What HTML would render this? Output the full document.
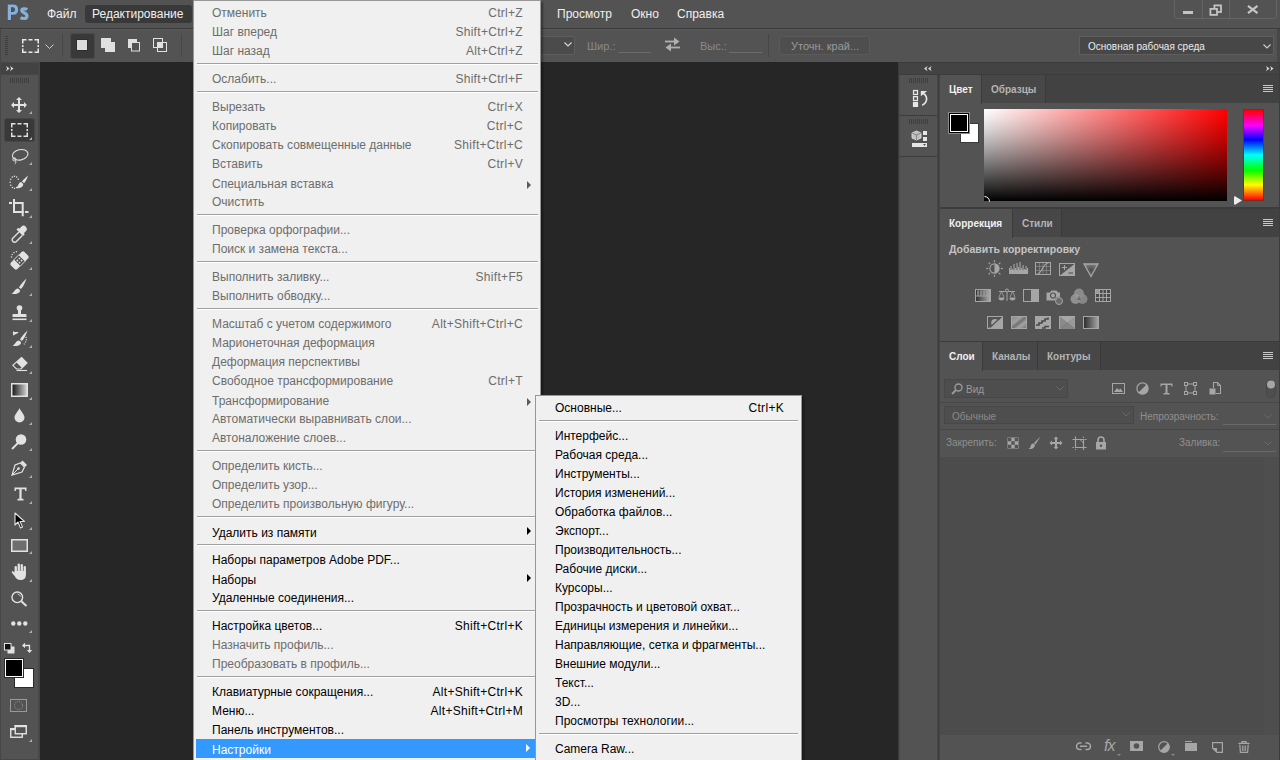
<!DOCTYPE html>
<html><head><meta charset="utf-8">
<style>
*{margin:0;padding:0;box-sizing:border-box}
html,body{width:1280px;height:760px;overflow:hidden;background:#535353;font-family:"Liberation Sans",sans-serif;position:relative}
.a{position:absolute}
svg{position:absolute;overflow:visible}
/* menubar */
#mbar{left:0;top:0;width:1280px;height:28px;background:#535353}
#mbar .m{position:absolute;top:6px;font-size:12px;color:#f0f0f0;line-height:16px}
#ps{left:7px;top:3px;font-size:20px;font-weight:bold;color:#6c9bd2;letter-spacing:-0.5px;line-height:20px}
#editbtn{left:85px;top:5px;width:107px;height:18px;background:#393939;border-radius:3px}
#mline{left:0;top:28px;width:1280px;height:1px;background:#3a3a3a}
#winctl{left:1174px;top:-3px;width:103px;height:22px;border:1px solid #646464;border-radius:0 0 3px 3px}
/* options */
#opts{left:0;top:29px;width:1280px;height:33px;background:#535353;border-top:1px solid #5a5a5a}
.vsep{position:absolute;width:1px;background:#474747}
.olbl{position:absolute;font-size:11px;color:#8f8f8f;line-height:14px}
/* canvas */
#canvas{left:40px;top:62px;width:858px;height:698px;background:#262626}
/* left tools */
#tools{left:0;top:62px;width:40px;height:698px;background:#474747}
#toolhdr{left:1px;top:63px;width:37px;height:11px;background:#434343}
#toolbody{left:1px;top:75px;width:37px;height:684px;background:#535353}
.tri{position:absolute;width:0;height:0;border-left:3px solid transparent;border-bottom:3px solid #c8c8c8}
/* right */
#rdock{left:898px;top:62px;width:42px;height:698px;background:#3c3c3c}
#rpanel{left:940px;top:62px;width:340px;height:698px;background:#3c3c3c}
.hdr{position:absolute;background:#434343}
.dockbtn{position:absolute;left:899px;width:38px;background:#535353}
.grip{position:absolute;height:5px;background:repeating-linear-gradient(90deg,#3e3e3e 0 1px,transparent 1px 2px)}
.panel{position:absolute;left:940px;width:339px;background:#535353}
.tabbar{position:absolute;left:0;top:0;right:0;height:28px;background:#424242}
.tab{position:absolute;top:0;height:28px;font-size:10px;font-weight:bold;line-height:30px;color:#b4b4b4;background:#474747;border-right:1px solid #3a3a3a;padding-left:9px}
.tab.act{background:#535353;color:#f0f0f0;height:29px}
.pmenu{position:absolute;right:6px;top:10px;width:10px;height:8px;background:repeating-linear-gradient(180deg,#c8c8c8 0 1px,transparent 1px 2px)}
.lbl{position:absolute;font-size:10px;color:#a8a8a8;line-height:14px}
.fld{position:absolute;background:#4e4e4e;border:1px solid #474747}
/* menus */
.menu{position:absolute;background:#f0f0f0;border:1px solid #979797}
.it{position:absolute;left:0;right:0;height:19px;font-size:12px;line-height:19px;color:#000}
.it .tx{position:absolute;left:18px;top:1px}
.it.sm .tx{top:2px}
.it .sc{position:absolute;right:17px;top:1px;letter-spacing:0.3px}
.it.dis{color:#6d6d6d}
.it.hi{background:#3399ff;color:#fff;left:2px;right:2px}
.it.hi .tx{left:16px}
.it .ar{position:absolute;right:9px;top:5px;width:0;height:0;border-left:4px solid #000;border-top:4px solid transparent;border-bottom:4px solid transparent}
.it.dis .ar{top:8px;border-left-color:#5a5a5a}
.it.hi .ar{border-left-color:#fff;right:8px}
.sep{position:absolute;left:3px;right:2px;background:#a0a0a0;border-bottom:1px solid #fff;height:2px}
#edit{left:193px;top:0px;width:348px;height:761px;box-shadow:2px 2px 2px rgba(0,0,0,0.35)}
#sub{left:535px;top:395px;width:267px;height:366px;box-shadow:2px 2px 2px rgba(0,0,0,0.35)}
#sub .sep{right:3px}
#sub .it .tx{left:19px}
</style></head><body>
<!-- MENUBAR -->
<div id="mbar" class="a">
  <svg style="left:0;top:0" width="32" height="24"><g stroke="#3a4656" stroke-width="1" fill="none" opacity="0.9"><path d="M7.7 4.4H13.5C16.5 4.4 18.2 6.2 18.2 9.5C18.2 12.8 16.3 14.8 13.3 14.8H11V20H7.7ZM11 7.2V12H13C14.3 12 15 11 15 9.6C15 8.2 14.3 7.2 13 7.2Z"/></g><path fill-rule="evenodd" fill="#88b0dd" d="M7.7 4.4H13.5C16.5 4.4 18.2 6.2 18.2 9.5C18.2 12.8 16.3 14.8 13.3 14.8H11V20H7.7ZM11 7.2V12H13C14.3 12 15 11 15 9.6C15 8.2 14.3 7.2 13 7.2Z"/><path d="M27.2 9.6C26.4 9 25.3 8.9 24.3 8.9C22.6 8.9 21.7 9.6 21.7 10.6C21.7 13 27 12.6 27 15.9C27 17.6 25.8 18.5 23.8 18.5C22.5 18.5 21.3 18.1 20.5 17.6" fill="none" stroke="#88b0dd" stroke-width="3.1"/></svg>
  <div class="m" style="left:47px">Файл</div>
  <div id="editbtn" class="a"></div>
  <div class="m" style="left:92px">Редактирование</div>
  <div class="m" style="left:557px">Просмотр</div>
  <div class="m" style="left:631px">Окно</div>
  <div class="m" style="left:677px">Справка</div>
  <div id="winctl" class="a"></div>
  <div class="a" style="left:1202px;top:0;width:1px;height:18px;background:#646464"></div>
  <div class="a" style="left:1229px;top:0;width:1px;height:18px;background:#646464"></div>
  <div class="a" style="left:1183px;top:11px;width:10px;height:3px;background:#c4c4c4"></div>
  <svg style="left:1209px;top:4px" width="14" height="12"><rect x="5.4" y="1.4" width="6.6" height="6.6" fill="none" stroke="#c4c4c4" stroke-width="1.8"/><rect x="1.4" y="4.9" width="6.6" height="6" fill="#535353" stroke="#c4c4c4" stroke-width="1.8"/></svg>
  <svg style="left:1247px;top:5px" width="12" height="9"><path d="M1 0.8L10.5 8.2M10.5 0.8L1 8.2" stroke="#c4c4c4" stroke-width="2.2"/></svg>
</div>
<div id="mline" class="a"></div>
<!-- OPTIONS -->
<div id="opts" class="a"></div>
<div class="a" style="left:0;top:29px;width:1px;height:33px;background:#474747"></div>
<div class="grip" style="left:5px;top:36px;width:3px;height:19px;background:repeating-linear-gradient(180deg,#3e3e3e 0 1px,transparent 1px 2px)"></div>
<svg style="left:22px;top:39px" width="17" height="14"><path d="M0.75 4.5V0.75H4.5M6.5 0.75H10.5M12.5 0.75H16.25V4.5M16.25 6V8M16.25 9.5V13.25H12.5M10.5 13.25H6.5M4.5 13.25H0.75V9.5M0.75 8V6" fill="none" stroke="#e8e8e8" stroke-width="1.5"/></svg>
<svg style="left:45px;top:44px" width="9" height="6"><path d="M0.5 0.5L4.5 4.5L8.5 0.5" fill="none" stroke="#d0d0d0" stroke-width="1"/></svg>
<div class="vsep" style="left:62px;top:34px;height:23px"></div>
<div class="a" style="left:70px;top:33px;width:25px;height:26px;background:#393939;border:1px solid #4a4a4a;border-radius:3px"></div>
<div class="a" style="left:76px;top:39px;width:12px;height:12px;background:#dcdcdc;border:1px solid #2e2e2e"></div>
<svg style="left:100px;top:37px" width="16" height="16"><rect x="1" y="1" width="10" height="10" fill="#e0e0e0"/><rect x="5" y="5" width="10" height="10" fill="#e0e0e0"/></svg>
<svg style="left:127px;top:38px" width="15" height="15"><rect x="1" y="1" width="9" height="9" fill="#e0e0e0"/><rect x="4.5" y="4.5" width="8" height="8.5" fill="#535353" stroke="#e0e0e0" stroke-width="1"/></svg>
<svg style="left:152px;top:37px" width="16" height="16"><rect x="1.5" y="1.5" width="9" height="9" fill="none" stroke="#e0e0e0" stroke-width="1"/><rect x="5.5" y="5.5" width="9" height="9" fill="none" stroke="#e0e0e0" stroke-width="1"/><rect x="5" y="5" width="6" height="6" fill="#e0e0e0"/></svg>
<div class="vsep" style="left:181px;top:34px;height:23px"></div>
<!-- right of menu -->
<div class="a" style="left:520px;top:36px;width:55px;height:19px;background:#4b4b4b;border:1px solid #5e5e5e;border-radius:2px"></div>
<svg style="left:564px;top:42px" width="8" height="5"><path d="M0.5 0.5L4 4L7.5 0.5" fill="none" stroke="#dadada" stroke-width="1.1"/></svg>
<div class="olbl" style="left:587px;top:39px;color:#8a8a8a;font-size:11px">Шир.:</div>
<div class="a" style="left:618px;top:52px;width:33px;height:1px;background:#6c6c6c"></div>
<svg style="left:664px;top:37px" width="17" height="15"><path d="M1 4.5H12" stroke="#b0b0b0" stroke-width="1.8"/><path d="M10 0.5L15.5 4.5L10 8.5Z" fill="#b0b0b0"/><path d="M5 10.5H16" stroke="#b0b0b0" stroke-width="1.8"/><path d="M7 6.5L1.5 10.5L7 14.5Z" fill="#b0b0b0"/></svg>
<div class="olbl" style="left:700px;top:39px;color:#8a8a8a;font-size:11px">Выс.:</div>
<div class="a" style="left:729px;top:52px;width:33px;height:1px;background:#6c6c6c"></div>
<div class="vsep" style="left:768px;top:34px;height:23px"></div>
<div class="a" style="left:779px;top:36px;width:91px;height:19px;background:#4e4e4e;border:1px solid #5a5a5a;border-radius:3px"></div>
<div class="olbl" style="left:791px;top:39px;color:#9a9a9a;font-size:11px">Уточн. край...</div>
<div class="a" style="left:1079px;top:36px;width:195px;height:19px;background:#474747;border:1px solid #5e5e5e"></div>
<div class="olbl" style="left:1088px;top:40px;color:#ececec;font-size:10px">Основная рабочая среда</div>
<svg style="left:1263px;top:44px" width="8" height="5"><path d="M0.5 0.5L4 4L7.5 0.5" fill="none" stroke="#cfcfcf" stroke-width="1.1"/></svg>
<div class="a" style="left:1277px;top:29px;width:3px;height:33px;background:#474747"></div>

<!-- TOOLS -->
<div id="tools" class="a"></div>
<div id="toolhdr" class="a"></div>
<div id="toolbody" class="a"></div>
<svg style="left:6px;top:66px" width="8" height="6"><path d="M0 0L3.6 2.6L0 5.2L1.1 2.6Z M4 0L7.6 2.6L4 5.2L5.1 2.6Z" fill="#d8d8d8"/></svg>
<div class="grip" style="left:10px;top:78px;width:20px"></div>
<svg style="left:11px;top:97px" width="16" height="16"><path d="M8 0L11 3H9V7H13V5L16 8L13 11V9H9V13H11L8 16L5 13H7V9H3V11L0 8L3 5V7H7V3H5Z" fill="#e2e2e2"/></svg>
<svg style="left:29px;top:111px" width="3" height="3"><path d="M3 0V3H0Z" fill="#b0b0b0"/></svg>
<div class="a" style="left:4px;top:118px;width:31px;height:24px;background:#393939;border:1px solid #464646;border-radius:3px"></div>
<svg style="left:11px;top:123px" width="17" height="14"><path d="M0.75 4.5V0.75H4.5M6.5 0.75H10.5M12.5 0.75H16.25V4.5M16.25 6V8M16.25 9.5V13.25H12.5M10.5 13.25H6.5M4.5 13.25H0.75V9.5M0.75 8V6" fill="none" stroke="#e2e2e2" stroke-width="1.5"/></svg>
<svg style="left:29px;top:137px" width="3" height="3"><path d="M3 0V3H0Z" fill="#b0b0b0"/></svg>
<svg style="left:11px;top:148px" width="18" height="17"><ellipse cx="9.2" cy="6.8" rx="7.9" ry="5.2" transform="rotate(-12 9.2 6.8)" fill="none" stroke="#e2e2e2" stroke-width="1.1"/><circle cx="3.4" cy="11.4" r="1.6" fill="none" stroke="#e2e2e2" stroke-width="1"/><path d="M4.5 12.5C5.2 14 4.8 15.5 3.8 16" fill="none" stroke="#e2e2e2" stroke-width="1"/></svg>
<svg style="left:29px;top:162px" width="3" height="3"><path d="M3 0V3H0Z" fill="#b0b0b0"/></svg>
<svg style="left:9px;top:175px" width="20" height="15"><circle cx="7.65" cy="12.50" r="0.75" fill="#e2e2e2"/><circle cx="5.50" cy="13.30" r="0.75" fill="#e2e2e2"/><circle cx="3.35" cy="12.50" r="0.75" fill="#e2e2e2"/><circle cx="1.78" cy="10.30" r="0.75" fill="#e2e2e2"/><circle cx="1.20" cy="7.30" r="0.75" fill="#e2e2e2"/><circle cx="1.78" cy="4.30" r="0.75" fill="#e2e2e2"/><circle cx="3.35" cy="2.10" r="0.75" fill="#e2e2e2"/><circle cx="5.50" cy="1.30" r="0.75" fill="#e2e2e2"/><circle cx="7.65" cy="2.10" r="0.75" fill="#e2e2e2"/><circle cx="9.22" cy="4.30" r="0.75" fill="#e2e2e2"/><path d="M19 0.5C17.5 1.8 14.5 4.5 13 6.3L15 8.3C16.6 6.6 18.3 3 19 0.5Z" fill="#e2e2e2"/><path d="M12.3 7C9.5 7.5 9.2 11 7.5 13.2C11 13.5 14.5 12 14.2 9Z" fill="#e2e2e2"/></svg>
<svg style="left:29px;top:188px" width="3" height="3"><path d="M3 0V3H0Z" fill="#b0b0b0"/></svg>
<svg style="left:9px;top:195px" width="21" height="22"><path d="M5 4V17H14.9M4 8H13.7V21.2M0 8H3M16 17H19.5" fill="none" stroke="#e2e2e2" stroke-width="2"/></svg>
<svg style="left:29px;top:215px" width="3" height="3"><path d="M3 0V3H0Z" fill="#b0b0b0"/></svg>
<svg style="left:11px;top:225px" width="17" height="18"><path d="M10.3 1.7A2.6 2.6 0 0 1 14.8 6.2L12.8 8.2L13.8 9.2L12 11L5.5 4.5L7.3 2.7L8.3 3.7Z" fill="#e2e2e2"/><path d="M8 7L2 13C0.9 14.1 0.9 15.6 1.9 16.5C2.9 17.5 4.4 17.4 5.4 16.4L11.3 10.5" fill="none" stroke="#e2e2e2" stroke-width="1.4"/></svg>
<svg style="left:29px;top:241px" width="3" height="3"><path d="M3 0V3H0Z" fill="#b0b0b0"/></svg>
<svg style="left:10px;top:250px" width="19" height="19"><path d="M1.5 7.5A6 6 0 0 1 7.5 1.5" fill="none" stroke="#e2e2e2" stroke-width="1.3" stroke-dasharray="1.1 1.4"/><g transform="rotate(-45 9.5 10.5)"><rect x="0" y="6" width="19" height="9" rx="2" fill="#e2e2e2"/><rect x="6" y="6" width="7" height="9" fill="#535353" stroke="#e2e2e2" stroke-width="0.8"/><circle cx="8" cy="9" r="0.9" fill="#e2e2e2"/><circle cx="11" cy="9" r="0.9" fill="#e2e2e2"/><circle cx="8" cy="12" r="0.9" fill="#e2e2e2"/><circle cx="11" cy="12" r="0.9" fill="#e2e2e2"/></g></svg>
<svg style="left:29px;top:267px" width="3" height="3"><path d="M3 0V3H0Z" fill="#b0b0b0"/></svg>
<svg style="left:11px;top:278px" width="16" height="17"><path d="M15.5 0.5C13 3 9 7 8 9.5L10 11C12 9 14.5 4 15.5 0.5Z" fill="#e2e2e2"/><path d="M7 10.5C4 10.5 3.5 14 0.5 16C4.5 16.5 9.5 15.5 9 12Z" fill="#e2e2e2"/></svg>
<svg style="left:29px;top:293px" width="3" height="3"><path d="M3 0V3H0Z" fill="#b0b0b0"/></svg>
<svg style="left:12px;top:305px" width="15" height="16"><circle cx="7.5" cy="3" r="2.8" fill="#e2e2e2"/><path d="M6 5H9V9H13.5C14.2 9 14.5 9.5 14.5 10V12H0.5V10C0.5 9.5 0.8 9 1.5 9H6Z" fill="#e2e2e2"/><rect x="0.5" y="13.5" width="14" height="1.6" fill="#e2e2e2"/></svg>
<svg style="left:29px;top:319px" width="3" height="3"><path d="M3 0V3H0Z" fill="#b0b0b0"/></svg>
<svg style="left:10px;top:330px" width="18" height="17"><path d="M9 2.5H5L3 1V5.5Z" fill="#e2e2e2"/><path d="M3.5 2.5H8" stroke="#e2e2e2" stroke-width="1"/><path d="M17.5 0.5C15 3 11 7 10 9.5L12 11C14 9 16.5 4 17.5 0.5Z" fill="#e2e2e2"/><path d="M9 10.5C6 10.5 5.5 14 2.5 16C6.5 16.5 11.5 15.5 11 12Z" fill="#e2e2e2"/><path d="M16 7C17 10 15.5 13 13.5 14.5" fill="none" stroke="#e2e2e2" stroke-width="1.2" stroke-dasharray="1 1.3"/></svg>
<svg style="left:29px;top:345px" width="3" height="3"><path d="M3 0V3H0Z" fill="#b0b0b0"/></svg>
<svg style="left:12px;top:357px" width="16" height="15"><path d="M9.5 0.5L15 6L9 12H4.5L0.8 8.3Z" fill="#535353" stroke="#e2e2e2" stroke-width="1.1"/><path d="M9.5 0.5L15 6L10 11L4.5 5.5Z" fill="#e2e2e2"/><path d="M4.5 13.5H15" stroke="#e2e2e2" stroke-width="1.1"/></svg>
<svg style="left:29px;top:371px" width="3" height="3"><path d="M3 0V3H0Z" fill="#b0b0b0"/></svg>
<svg style="left:11px;top:383px" width="17" height="14"><defs><linearGradient id="tg"><stop offset="0" stop-color="#111"/><stop offset="1" stop-color="#d8d8d8"/></linearGradient></defs><rect x="0.75" y="0.75" width="15.5" height="12.5" fill="url(#tg)" stroke="#e2e2e2" stroke-width="1.5"/></svg>
<svg style="left:29px;top:397px" width="3" height="3"><path d="M3 0V3H0Z" fill="#b0b0b0"/></svg>
<svg style="left:14px;top:408px" width="11" height="15"><path d="M5.5 0C6.5 3 10.5 6.5 10.5 9.5A5 5 0 0 1 0.5 9.5C0.5 6.5 4.5 3 5.5 0Z" fill="#e2e2e2"/></svg>
<svg style="left:29px;top:422px" width="3" height="3"><path d="M3 0V3H0Z" fill="#b0b0b0"/></svg>
<svg style="left:11px;top:434px" width="16" height="16"><circle cx="10" cy="5.5" r="5.3" fill="#e2e2e2"/><path d="M7 9L1 15" stroke="#e2e2e2" stroke-width="1.8"/></svg>
<svg style="left:29px;top:448px" width="3" height="3"><path d="M3 0V3H0Z" fill="#b0b0b0"/></svg>
<svg style="left:11px;top:460px" width="17" height="16"><path d="M11.5 0.5L16 5L14 7L9.5 2.5Z" fill="#e2e2e2"/><path d="M9.5 3L13.5 7L11 12L1 15L4 5Z" fill="none" stroke="#e2e2e2" stroke-width="1.2"/><path d="M1.5 14.5L7 9" stroke="#e2e2e2" stroke-width="1"/><circle cx="7.5" cy="8.5" r="1.3" fill="#e2e2e2"/></svg>
<svg style="left:29px;top:475px" width="3" height="3"><path d="M3 0V3H0Z" fill="#b0b0b0"/></svg>
<svg style="left:14px;top:487px" width="13" height="14"><path d="M0.5 0.5H12.5V4H11.3L10.8 2.3H7.6V11.7H9.5V13.5H3.5V11.7H5.4V2.3H2.2L1.7 4H0.5Z" fill="#e2e2e2"/></svg>
<svg style="left:29px;top:501px" width="3" height="3"><path d="M3 0V3H0Z" fill="#b0b0b0"/></svg>
<svg style="left:14px;top:512px" width="12" height="17"><path d="M1 1V13L4 10L6.5 16L8.5 15L6 9.5H10.5Z" fill="#000" stroke="#e2e2e2" stroke-width="1.1" stroke-linejoin="round"/></svg>
<svg style="left:29px;top:527px" width="3" height="3"><path d="M3 0V3H0Z" fill="#b0b0b0"/></svg>
<svg style="left:11px;top:539px" width="17" height="13"><rect x="0.75" y="0.75" width="15.5" height="11.5" fill="#6e6e6e" stroke="#e2e2e2" stroke-width="1.5"/></svg>
<svg style="left:29px;top:551px" width="3" height="3"><path d="M3 0V3H0Z" fill="#b0b0b0"/></svg>
<svg style="left:11px;top:563px" width="17" height="18"><rect x="3.6" y="3" width="2.3" height="8" rx="1.15" fill="#e2e2e2"/><rect x="6.6" y="0.5" width="2.3" height="10" rx="1.15" fill="#e2e2e2"/><rect x="9.6" y="1" width="2.3" height="10" rx="1.15" fill="#e2e2e2"/><rect x="12.6" y="3" width="2.3" height="9" rx="1.15" fill="#e2e2e2"/><path d="M3.6 8H14.9V12C14.9 15 13 17 9.5 17C6.5 17 5 15.5 4 13.5L0.8 9.5C0.3 8.7 1.3 7.8 2.2 8.4L3.6 9.8Z" fill="#e2e2e2"/></svg>
<svg style="left:29px;top:579px" width="3" height="3"><path d="M3 0V3H0Z" fill="#b0b0b0"/></svg>
<svg style="left:11px;top:591px" width="17" height="16"><circle cx="6.3" cy="6.3" r="5.3" fill="none" stroke="#e2e2e2" stroke-width="1.4"/><path d="M10.3 10.3L15.5 15" stroke="#e2e2e2" stroke-width="2"/><path d="M6.5 3A3.5 3.5 0 0 1 9.5 5.5" fill="none" stroke="#e2e2e2" stroke-width="0.8"/></svg>
<svg style="left:11px;top:621px" width="17" height="6"><circle cx="2.3" cy="2.5" r="2.2" fill="#e2e2e2"/><circle cx="8.3" cy="2.5" r="2.2" fill="#e2e2e2"/><circle cx="14.3" cy="2.5" r="2.2" fill="#e2e2e2"/></svg>
<svg style="left:29px;top:630px" width="3" height="3"><path d="M3 0V3H0Z" fill="#b0b0b0"/></svg>
<svg style="left:4px;top:643px" width="11" height="11"><rect x="3.5" y="3.5" width="7" height="7" fill="#e2e2e2"/><rect x="0.5" y="0.5" width="6.5" height="6.5" fill="#111" stroke="#e2e2e2" stroke-width="1"/></svg>
<svg style="left:22px;top:642px" width="11" height="11"><path d="M2 3.5H7.5V10" fill="none" stroke="#e2e2e2" stroke-width="1.3"/><path d="M0 3.5L3 0.8V6.2Z" fill="#e2e2e2"/><path d="M4.8 8L7.5 11L10.2 8Z" fill="#e2e2e2"/></svg>
<div class="a" style="left:14px;top:668px;width:20px;height:20px;background:#fff;border:1px solid #2a2a2a"></div>
<div class="a" style="left:4px;top:658px;width:20px;height:20px;background:#000;border:1px solid #2a2a2a;box-shadow:inset 0 0 0 1px #fff"></div>
<svg style="left:10px;top:699px" width="17" height="13"><rect x="0.5" y="0.5" width="16" height="12" fill="none" stroke="#9a9a9a" stroke-width="1"/><circle cx="8.5" cy="6.5" r="4" fill="none" stroke="#9a9a9a" stroke-width="1" stroke-dasharray="1 1.1"/></svg>
<svg style="left:10px;top:725px" width="17" height="13"><rect x="0.75" y="3.75" width="11.5" height="8.5" fill="none" stroke="#e2e2e2" stroke-width="1.4"/><rect x="0" y="3" width="6" height="2.2" fill="#e2e2e2"/><rect x="5.25" y="0.75" width="11" height="8" fill="#535353" stroke="#e2e2e2" stroke-width="1.4"/><rect x="4.5" y="0" width="12.5" height="2.2" fill="#e2e2e2"/></svg>
<svg style="left:29px;top:739px" width="3" height="3"><path d="M3 0V3H0Z" fill="#b0b0b0"/></svg>
<div id="canvas" class="a"></div>
<!-- RIGHT -->
<div id="rdock" class="a"></div>
<div id="rpanel" class="a"></div>
<!-- header strip -->
<div class="hdr" style="left:899px;top:63px;width:380px;height:11px"></div>
<svg style="left:924px;top:66px" width="8" height="6"><path d="M3.6 0L0 2.6L3.6 5.2L2.5 2.6Z M7.6 0L4 2.6L7.6 5.2L6.5 2.6Z" fill="#d8d8d8"/></svg>
<svg style="left:1266px;top:66px" width="8" height="6"><path d="M0 0L3.6 2.6L0 5.2L1.1 2.6Z M4 0L7.6 2.6L4 5.2L5.1 2.6Z" fill="#d8d8d8"/></svg>
<!-- dock buttons -->
<div class="dockbtn" style="top:75px;height:40px"></div>
<div class="grip" style="left:909px;top:78px;width:20px"></div>
<svg style="left:912px;top:89px" width="18" height="19">
  <rect x="1.55" y="1.55" width="3.9" height="3.9" fill="none" stroke="#e6e6e6" stroke-width="1.3"/>
  <rect x="1.55" y="7.65" width="3.9" height="3.9" fill="none" stroke="#e6e6e6" stroke-width="1.3"/>
  <rect x="0.9" y="13" width="5.2" height="5" fill="#e6e6e6"/>
  <path d="M8.8 2L15.1 2L8.8 7.2Z" fill="#e6e6e6"/>
  <path d="M11 4.2C14.3 5.5 15.3 9.5 14.2 12.3C13.4 14.3 12 15.5 10.2 16.3" fill="none" stroke="#e6e6e6" stroke-width="1.7"/>
</svg>
<div class="dockbtn" style="top:116px;height:40px"></div>
<div class="grip" style="left:909px;top:119px;width:20px"></div>
<svg style="left:911px;top:130px" width="18" height="18">
  <path d="M1 3L5.5 1L10 3V8L5.5 10L1 8Z" fill="#bdbdbd" stroke="#e6e6e6" stroke-width="0.8"/>
  <path d="M1 3L5.5 5L10 3M5.5 5V10" fill="none" stroke="#777" stroke-width="0.8"/>
  <rect x="12" y="1" width="4" height="4" fill="#e6e6e6"/>
  <rect x="12" y="7" width="4" height="4" fill="#e6e6e6"/>
  <rect x="1" y="13" width="15" height="4" fill="#e6e6e6"/>
  <path d="M12 14H15L13.5 16Z" fill="#555"/>
</svg>
<div class="dockbtn" style="top:157px;height:603px"></div>
<div class="a" style="left:937px;top:75px;width:1px;height:685px;background:#464646"></div>
<div class="a" style="left:939px;top:75px;width:1px;height:685px;background:#464646"></div>
<div class="a" style="left:899px;top:75px;width:1px;height:685px;background:#4a4a4a"></div>

<!-- COLOR PANEL -->
<div class="panel" style="top:75px;height:133px">
  <div class="tabbar"></div>
  <div class="tab act" style="left:0;width:42px">Цвет</div>
  <div class="tab" style="left:42px;width:64px;top:0">Образцы</div>
  <div class="pmenu"></div>
</div>
<!-- swatches -->
<div class="a" style="left:960px;top:123px;width:19px;height:20px;background:#fff;border:1px solid #3a3a3a"></div>
<div class="a" style="left:948px;top:112px;width:22px;height:22px;border:1px solid #8a8a8a;background:#000;box-shadow:inset 0 0 0 1px #000, inset 0 0 0 2px #fff"></div>
<!-- color field -->
<div class="a" style="left:984px;top:109px;width:243px;height:92px;background:linear-gradient(to bottom,rgba(0,0,0,0.000) 0.0%,rgba(0,0,0,0.074) 12.5%,rgba(0,0,0,0.177) 25.0%,rgba(0,0,0,0.293) 37.5%,rgba(0,0,0,0.420) 50.0%,rgba(0,0,0,0.556) 62.5%,rgba(0,0,0,0.698) 75.0%,rgba(0,0,0,0.846) 87.5%,rgba(0,0,0,1.000) 100.0%),linear-gradient(to right,#fff,#f00)"></div>
<svg style="left:984px;top:196px" width="7" height="6"><path d="M0.5 0.5 A5 5 0 0 1 5.5 5.5" fill="none" stroke="#fff" stroke-width="1"/></svg>
<div class="a" style="left:1243px;top:109px;width:21px;height:92px;border:1px solid #7a2b2b;background:linear-gradient(to bottom,#f00 0%,#f0f 17%,#00f 33%,#0ff 50%,#0f0 67%,#ff0 83%,#f00 100%)"></div>
<svg style="left:1233px;top:196px" width="10" height="10"><path d="M1 1.5C1 0.5 1.5 0 2.5 0.5L9 4.5L2.5 8.5C1.5 9 1 8.5 1 7.5Z" fill="#ececec"/></svg>
<div class="a" style="left:940px;top:207px;width:339px;height:2px;background:#3c3c3c"></div>

<!-- CORRECTION PANEL -->
<div class="panel" style="top:209px;height:132px">
  <div class="tabbar"></div>
  <div class="tab act" style="left:0;width:73px">Коррекция</div>
  <div class="tab" style="left:73px;width:49px">Стили</div>
  <div class="pmenu"></div>
  <div class="a" style="left:9px;top:33px;font-size:10.5px;font-weight:bold;color:#c4c4c4;line-height:14px">Добавить корректировку</div>
</div>
<svg style="left:986px;top:260px" width="17" height="17"><circle cx="8.5" cy="8.5" r="4.6" fill="none" stroke="#a6a6a6" stroke-width="1.1"/><path d="M8.5 3.9A4.6 4.6 0 0 1 8.5 13.1Z" fill="#a6a6a6"/><line x1="14.80" y1="8.50" x2="16.80" y2="8.50" stroke="#a6a6a6" stroke-width="1.2"/><line x1="12.95" y1="12.95" x2="14.37" y2="14.37" stroke="#a6a6a6" stroke-width="1.2"/><line x1="8.50" y1="14.80" x2="8.50" y2="16.80" stroke="#a6a6a6" stroke-width="1.2"/><line x1="4.05" y1="12.95" x2="2.63" y2="14.37" stroke="#a6a6a6" stroke-width="1.2"/><line x1="2.20" y1="8.50" x2="0.20" y2="8.50" stroke="#a6a6a6" stroke-width="1.2"/><line x1="4.05" y1="4.05" x2="2.63" y2="2.63" stroke="#a6a6a6" stroke-width="1.2"/><line x1="8.50" y1="2.20" x2="8.50" y2="0.20" stroke="#a6a6a6" stroke-width="1.2"/><line x1="12.95" y1="4.05" x2="14.37" y2="2.63" stroke="#a6a6a6" stroke-width="1.2"/></svg>
<svg style="left:1009px;top:262px" width="20" height="13"><rect x="0" y="8" width="19" height="4" fill="#a6a6a6"/><rect x="0.0" y="6" width="1.1" height="5" fill="#a6a6a6"/><rect x="1.5" y="4" width="1.1" height="7" fill="#a6a6a6"/><rect x="3.0" y="7" width="1.1" height="4" fill="#a6a6a6"/><rect x="4.5" y="2" width="1.1" height="9" fill="#a6a6a6"/><rect x="6.0" y="6" width="1.1" height="5" fill="#a6a6a6"/><rect x="7.5" y="1" width="1.1" height="10" fill="#a6a6a6"/><rect x="9.0" y="5" width="1.1" height="6" fill="#a6a6a6"/><rect x="10.5" y="0" width="1.1" height="11" fill="#a6a6a6"/><rect x="12.0" y="6" width="1.1" height="5" fill="#a6a6a6"/><rect x="13.5" y="3" width="1.1" height="8" fill="#a6a6a6"/><rect x="15.0" y="7" width="1.1" height="4" fill="#a6a6a6"/><rect x="16.5" y="4" width="1.1" height="7" fill="#a6a6a6"/><rect x="18.0" y="6" width="1.1" height="5" fill="#a6a6a6"/></svg>
<svg style="left:1035px;top:262px" width="17" height="14"><rect x="0.5" y="0.5" width="15" height="12" fill="none" stroke="#a6a6a6"/><path d="M4.5 0.5V12.5M8 0.5V12.5M11.5 0.5V12.5M0.5 4.5H15.5M0.5 8.5H15.5" stroke="#a6a6a6" stroke-width="0.7" opacity="0.7"/><path d="M0.5 12.5C5 12.5 6 9 7.5 6.5C9 4 10 0.5 15.5 0.5" fill="none" stroke="#a6a6a6" stroke-width="1.1"/></svg>
<svg style="left:1059px;top:263px" width="17" height="14"><rect x="0.5" y="0.5" width="15" height="12" fill="none" stroke="#a6a6a6"/><path d="M1 12.5L15.5 1V12.5Z" fill="#a6a6a6"/><path d="M3 4.5H8M5.5 2V7" stroke="#a6a6a6" stroke-width="1.1"/><path d="M9.5 10H14" stroke="#535353" stroke-width="1.1"/></svg>
<svg style="left:1083px;top:263px" width="16" height="14"><defs><radialGradient id="vg"><stop offset="0" stop-color="#4a4a4a"/><stop offset="1" stop-color="#7a7a7a"/></radialGradient></defs><path d="M1 1H15L8 13.5Z" fill="url(#vg)" stroke="#a6a6a6" stroke-width="1.3"/></svg>
<svg style="left:975px;top:289px" width="17" height="14"><defs><linearGradient id="hg"><stop offset="0" stop-color="#2e2e2e"/><stop offset="1" stop-color="#b0b0b0"/></linearGradient></defs><rect x="0.5" y="0.5" width="15" height="12" fill="url(#hg)" stroke="#a6a6a6"/><path d="M3 1.5V6.5M6 1.5V6.5M9 1.5V6.5M12 1.5V6.5" stroke="#9a9a9a" stroke-width="1.4"/><rect x="1" y="6.5" width="15" height="1" fill="#a6a6a6"/></svg>
<svg style="left:998px;top:288px" width="19" height="15"><path d="M1 3.5H17M9 1.5V13" stroke="#a6a6a6" stroke-width="1"/><circle cx="9" cy="2.5" r="1.5" fill="#535353" stroke="#a6a6a6"/><path d="M3.5 3.5L1 9M3.5 3.5L6 9M14.5 3.5L12 9M14.5 3.5L17 9" stroke="#a6a6a6" stroke-width="0.8"/><path d="M0.5 9.5H6.5A3 3 0 0 1 0.5 9.5Z" fill="#a6a6a6"/><path d="M11.5 9.5H17.5A3 3 0 0 1 11.5 9.5Z" fill="#a6a6a6"/></svg>
<svg style="left:1023px;top:289px" width="17" height="14"><rect x="0.5" y="0.5" width="15" height="12" fill="none" stroke="#a6a6a6"/><rect x="8" y="0.5" width="8" height="12.5" fill="#a6a6a6"/></svg>
<svg style="left:1046px;top:289px" width="18" height="17"><path d="M0.5 3.5H4L5.5 1.5H10.5L12 3.5H14V8A4 4 0 0 0 9 11.5H0.5Z" fill="#a6a6a6"/><circle cx="7" cy="6.5" r="2.5" fill="none" stroke="#535353" stroke-width="1.2"/><circle cx="13" cy="12" r="3.5" fill="#6a6a6a" stroke="#a6a6a6" stroke-width="1"/></svg>
<svg style="left:1070px;top:288px" width="18" height="17"><circle cx="9" cy="5.5" r="5" fill="#8a8a8a"/><circle cx="5.5" cy="11" r="5" fill="#9a9a9a" opacity="0.85"/><circle cx="12.5" cy="11" r="5" fill="#8f8f8f" opacity="0.85"/><path d="M9 8L7 12H11Z" fill="#6a6a6a"/></svg>
<svg style="left:1095px;top:289px" width="17" height="14"><rect x="0.5" y="0.5" width="15" height="12" fill="#4a4a4a" stroke="#a6a6a6"/><path d="M4.5 0.5V12.5M8 0.5V12.5M11.5 0.5V12.5M0.5 4.5H15.5M0.5 8.5H15.5" stroke="#a6a6a6" stroke-width="1"/><rect x="1" y="1" width="3" height="3" fill="#9a9a9a"/></svg>
<svg style="left:987px;top:316px" width="17" height="14"><rect x="0.5" y="0.5" width="15" height="12" fill="none" stroke="#a6a6a6"/><path d="M1 12.5L15.5 1V12.5Z" fill="#a6a6a6"/><circle cx="8" cy="6.8" r="3.8" fill="#a6a6a6"/><path d="M3 11.5L13 2" stroke="#535353" stroke-width="1.1"/></svg>
<svg style="left:1011px;top:316px" width="17" height="14"><defs><linearGradient id="pg" x1="0" y1="0" x2="1" y2="1"><stop offset="0" stop-color="#8a8a8a"/><stop offset="0.35" stop-color="#a0a0a0"/><stop offset="0.5" stop-color="#707070"/><stop offset="0.7" stop-color="#a5a5a5"/><stop offset="1" stop-color="#6a6a6a"/></linearGradient></defs><rect x="0.5" y="0.5" width="15" height="12" fill="url(#pg)" stroke="#a6a6a6"/></svg>
<svg style="left:1035px;top:316px" width="17" height="14"><rect x="0.5" y="0.5" width="15" height="12" fill="#a6a6a6" stroke="#a6a6a6"/><path d="M1 9L4 9L4 7L7 7L7 5L10 5L10 3L13 3L13 1.5" fill="none" stroke="#4a4a4a" stroke-width="1.6"/><path d="M7 12L10 12L10 10.5L14 10.5" fill="none" stroke="#4a4a4a" stroke-width="1.4"/></svg>
<svg style="left:1059px;top:316px" width="17" height="14"><rect x="0.5" y="0.5" width="15" height="12" fill="none" stroke="#a6a6a6"/><path d="M1 1L8.5 7L1 13Z" fill="#8a8a8a"/><path d="M16 1L8.5 7L16 13Z" fill="#9a9a9a"/><path d="M1 1L8.5 7L16 1Z" fill="#a6a6a6"/><path d="M1 13L8.5 7L16 13Z" fill="#858585"/></svg>
<svg style="left:1083px;top:316px" width="17" height="14"><defs><linearGradient id="gm"><stop offset="0" stop-color="#2a2a2a"/><stop offset="1" stop-color="#a8a8a8"/></linearGradient></defs><rect x="0.5" y="0.5" width="15" height="12" fill="url(#gm)" stroke="#a6a6a6"/></svg>

<!-- LAYERS PANEL -->
<div class="panel" style="top:342px;height:418px">
  <div class="tabbar"></div>
  <div class="tab act" style="left:0;width:43px">Слои</div>
  <div class="tab" style="left:43px;width:55px">Каналы</div>
  <div class="tab" style="left:98px;width:63px">Контуры</div>
  <div class="pmenu"></div>
</div>
<!-- filter row -->
<div class="fld" style="left:944px;top:379px;width:124px;height:19px"></div>
<svg style="left:951px;top:383px" width="12" height="12"><circle cx="7.5" cy="4.5" r="3.5" fill="none" stroke="#999" stroke-width="1.4"/><path d="M5 7L1 11" stroke="#999" stroke-width="2"/></svg>
<div class="lbl" style="left:966px;top:383px;color:#9a9a9a">Вид</div>
<svg style="left:1056px;top:386px" width="8" height="5"><path d="M0.5 0.5L4 4L7.5 0.5" fill="none" stroke="#6a6a6a"/></svg>
<svg style="left:1112px;top:383px" width="13" height="12"><rect x="0.5" y="0.5" width="12" height="10" fill="none" stroke="#a6a6a6"/><path d="M2 9L5 5L7 7L8.5 5.5L11 9Z" fill="#a6a6a6"/></svg>
<svg style="left:1136px;top:382px" width="13" height="13"><circle cx="6.5" cy="6.5" r="5.6" fill="none" stroke="#a6a6a6" stroke-width="1.2"/><path d="M10.5 2.5A5.6 5.6 0 0 1 2.5 10.5Z" fill="#a6a6a6"/></svg>
<svg style="left:1160px;top:383px" width="13" height="12"><path d="M0.5 0.5H12.5V3.5H11.5L11 2H7.5V10H9.5V11.5H3.5V10H5.5V2H2L1.5 3.5H0.5Z" fill="#a6a6a6"/></svg>
<svg style="left:1184px;top:382px" width="13" height="13"><rect x="2" y="2" width="9" height="9" fill="none" stroke="#a6a6a6"/><rect x="0.5" y="0.5" width="3" height="3" fill="#535353" stroke="#a6a6a6"/><rect x="9.5" y="0.5" width="3" height="3" fill="#535353" stroke="#a6a6a6"/><rect x="0.5" y="9.5" width="3" height="3" fill="#535353" stroke="#a6a6a6"/><rect x="9.5" y="9.5" width="3" height="3" fill="#535353" stroke="#a6a6a6"/></svg>
<svg style="left:1209px;top:382px" width="12" height="14"><path d="M4.5 6V0.5H8.5L11.5 3.5V11.5H7" fill="none" stroke="#a6a6a6" stroke-width="1.1"/><path d="M8.5 0.5V3.5H11.5" fill="none" stroke="#a6a6a6" stroke-width="0.9"/><rect x="0.5" y="6.5" width="6" height="6" fill="#a6a6a6"/></svg>
<svg style="left:1266px;top:380px" width="10" height="18"><rect x="0.5" y="0.5" width="9" height="17" rx="4.5" fill="#4e4e4e" stroke="#474747"/><circle cx="5" cy="4.5" r="4" fill="#a6a6a6"/></svg>

<div class="a" style="left:940px;top:402px;width:339px;height:1px;background:#474747"></div>
<!-- blend row -->
<div class="fld" style="left:944px;top:406px;width:190px;height:18px"></div>
<div class="lbl" style="left:952px;top:410px;color:#8a8a8a">Обычные</div>
<svg style="left:1122px;top:412px" width="8" height="5"><path d="M0.5 0.5L4 4L7.5 0.5" fill="none" stroke="#6a6a6a"/></svg>
<div class="lbl" style="left:1140px;top:410px;color:#8f8f8f">Непрозрачность:</div>
<div class="a" style="left:1223px;top:424px;width:53px;height:1px;background:#6a6a6a"></div>
<svg style="left:1264px;top:414px" width="8" height="5"><path d="M0.5 0.5L4 4L7.5 0.5" fill="none" stroke="#6a6a6a"/></svg>
<div class="a" style="left:940px;top:429px;width:339px;height:1px;background:#474747"></div>
<!-- lock row -->
<div class="lbl" style="left:946px;top:436px;color:#8f8f8f">Закрепить:</div>
<svg style="left:1007px;top:437px" width="12" height="12"><rect x="0.5" y="0.5" width="11" height="11" fill="#a6a6a6"/><path d="M1 1h3.3v3.3H1zM7.7 1H11v3.3H7.7zM4.3 4.3h3.4v3.4H4.3zM1 7.7h3.3V11H1zM7.7 7.7H11V11H7.7z" fill="#535353"/></svg>
<svg style="left:1028px;top:436px" width="13" height="14"><path d="M12.5 0.5L6 7L7.5 8.5Z" fill="#a6a6a6"/><path d="M5.5 7.5C3 7.5 2.5 10 2.5 11C2 12 1 12.5 0.5 13C3 13.5 6.5 12.5 7 9Z" fill="#a6a6a6"/></svg>
<svg style="left:1049px;top:436px" width="14" height="14"><path d="M7 0.5L9.5 3H8V6H11V4.5L13.5 7L11 9.5V8H8V11H9.5L7 13.5L4.5 11H6V8H3V9.5L0.5 7L3 4.5V6H6V3H4.5Z" fill="#a6a6a6"/></svg>
<svg style="left:1072px;top:436px" width="15" height="14"><path d="M3.5 0.5V11.5H14.5M0.5 3.5H11.5V14" fill="none" stroke="#a6a6a6" stroke-width="1.1"/><path d="M0.5 11.5H2M12.5 3.5H14.5M3.5 13V14M11.5 0.5V2" stroke="#a6a6a6"/><path d="M8 3.5L11.5 7" stroke="#a6a6a6"/></svg>
<svg style="left:1095px;top:436px" width="12" height="14"><path d="M3 6V4A3 3 0 0 1 9 4V6" fill="none" stroke="#a6a6a6" stroke-width="1.6"/><rect x="1" y="6" width="10" height="7.5" fill="#a6a6a6"/><circle cx="6" cy="9.7" r="1.2" fill="#535353"/></svg>

<div class="lbl" style="left:1179px;top:436px;color:#8f8f8f">Заливка:</div>
<div class="a" style="left:1223px;top:451px;width:53px;height:1px;background:#6a6a6a"></div>
<svg style="left:1264px;top:441px" width="8" height="5"><path d="M0.5 0.5L4 4L7.5 0.5" fill="none" stroke="#6a6a6a"/></svg>
<!-- layers body -->
<div class="a" style="left:940px;top:457px;width:339px;height:278px;background:#4c4c4c"></div>
<div class="a" style="left:1264px;top:457px;width:15px;height:278px;background:#4e4e4e"></div>
<div class="a" style="left:940px;top:735px;width:339px;height:25px;background:#535353"></div>
<svg style="left:1076px;top:742px" width="15" height="9"><path d="M5.5 1H3.8A3 3 0 0 0 3.8 7.5H5.5M9.5 1H11.2A3 3 0 0 1 11.2 7.5H9.5" fill="none" stroke="#a6a6a6" stroke-width="1.5"/><path d="M4 4.25H11" stroke="#a6a6a6" stroke-width="1.5"/></svg>
<div class="a" style="left:1104px;top:737px;font-size:16px;font-style:italic;font-family:'Liberation Sans',sans-serif;color:#a6a6a6;line-height:18px;letter-spacing:-1px">fx</div>
<svg style="left:1117px;top:754px" width="5" height="3"><path d="M0 0H4L2 2Z" fill="#8a8a8a"/></svg>
<svg style="left:1130px;top:741px" width="14" height="10"><rect x="0" y="0" width="13" height="10" fill="#a6a6a6"/><circle cx="6.5" cy="5" r="2.8" fill="#535353"/></svg>
<svg style="left:1158px;top:741px" width="12" height="12"><circle cx="6" cy="6" r="5.3" fill="none" stroke="#a6a6a6" stroke-width="1.2"/><path d="M9.75 2.25A5.3 5.3 0 0 1 2.25 9.75Z" fill="#a6a6a6"/></svg>
<svg style="left:1171px;top:754px" width="5" height="3"><path d="M0 0H4L2 2Z" fill="#8a8a8a"/></svg>
<svg style="left:1185px;top:741px" width="13" height="11"><rect x="0" y="0" width="7" height="1" fill="#a6a6a6"/><rect x="0" y="2" width="12" height="8" fill="#a6a6a6"/></svg>
<svg style="left:1212px;top:742px" width="11" height="11"><path d="M0.6 0.6H10.4V10.4H5L0.6 6Z" fill="none" stroke="#a6a6a6" stroke-width="1.2"/><path d="M0.6 6H5V10.4Z" fill="#a6a6a6"/></svg>
<svg style="left:1238px;top:741px" width="12" height="12"><path d="M0.5 2.3H11.5M4 2.3V0.6H8V2.3" fill="none" stroke="#a6a6a6" stroke-width="1.2"/><path d="M1.8 3.5L2.4 11.4H9.6L10.2 3.5" fill="none" stroke="#a6a6a6" stroke-width="1.2"/><path d="M4.4 4.5V10M6 4.5V10M7.6 4.5V10" stroke="#a6a6a6" stroke-width="0.9"/></svg>

<div class="a" style="left:1279px;top:62px;width:1px;height:698px;background:#3c3c3c"></div>


<div id="edit" class="menu">
<div class="it dis" style="top:2px"><span class="tx">Отменить</span><span class="sc">Ctrl+Z</span></div>
<div class="it dis" style="top:21px"><span class="tx">Шаг вперед</span><span class="sc">Shift+Ctrl+Z</span></div>
<div class="it dis" style="top:40px"><span class="tx">Шаг назад</span><span class="sc">Alt+Ctrl+Z</span></div>
<div class="sep" style="top:62px"></div>
<div class="it dis" style="top:68px"><span class="tx">Ослабить...</span><span class="sc">Shift+Ctrl+F</span></div>
<div class="sep" style="top:90px"></div>
<div class="it dis" style="top:96px"><span class="tx">Вырезать</span><span class="sc">Ctrl+X</span></div>
<div class="it dis" style="top:115px"><span class="tx">Копировать</span><span class="sc">Ctrl+C</span></div>
<div class="it dis" style="top:134px"><span class="tx">Скопировать совмещенные данные</span><span class="sc">Shift+Ctrl+C</span></div>
<div class="it dis" style="top:153px"><span class="tx">Вставить</span><span class="sc">Ctrl+V</span></div>
<div class="it dis sm" style="top:172px"><span class="tx">Специальная вставка</span><span class="ar"></span></div>
<div class="it dis" style="top:191px"><span class="tx">Очистить</span></div>
<div class="sep" style="top:213px"></div>
<div class="it dis" style="top:219px"><span class="tx">Проверка орфографии...</span></div>
<div class="it dis" style="top:238px"><span class="tx">Поиск и замена текста...</span></div>
<div class="sep" style="top:260px"></div>
<div class="it dis" style="top:266px"><span class="tx">Выполнить заливку...</span><span class="sc">Shift+F5</span></div>
<div class="it dis" style="top:285px"><span class="tx">Выполнить обводку...</span></div>
<div class="sep" style="top:307px"></div>
<div class="it dis" style="top:313px"><span class="tx">Масштаб с учетом содержимого</span><span class="sc">Alt+Shift+Ctrl+C</span></div>
<div class="it dis" style="top:332px"><span class="tx">Марионеточная деформация</span></div>
<div class="it dis" style="top:351px"><span class="tx">Деформация перспективы</span></div>
<div class="it dis" style="top:370px"><span class="tx">Свободное трансформирование</span><span class="sc">Ctrl+T</span></div>
<div class="it dis sm" style="top:389px"><span class="tx">Трансформирование</span><span class="ar"></span></div>
<div class="it dis" style="top:408px"><span class="tx">Автоматически выравнивать слои...</span></div>
<div class="it dis" style="top:427px"><span class="tx">Автоналожение слоев...</span></div>
<div class="sep" style="top:449px"></div>
<div class="it dis" style="top:455px"><span class="tx">Определить кисть...</span></div>
<div class="it dis" style="top:474px"><span class="tx">Определить узор...</span></div>
<div class="it dis" style="top:493px"><span class="tx">Определить произвольную фигуру...</span></div>
<div class="sep" style="top:515px"></div>
<div class="it sm" style="top:521px"><span class="tx">Удалить из памяти</span><span class="ar"></span></div>
<div class="sep" style="top:543px"></div>
<div class="it" style="top:549px"><span class="tx">Наборы параметров Adobe PDF...</span></div>
<div class="it sm" style="top:568px"><span class="tx">Наборы</span><span class="ar"></span></div>
<div class="it" style="top:587px"><span class="tx">Удаленные соединения...</span></div>
<div class="sep" style="top:609px"></div>
<div class="it" style="top:615px"><span class="tx">Настройка цветов...</span><span class="sc">Shift+Ctrl+K</span></div>
<div class="it dis" style="top:634px"><span class="tx">Назначить профиль...</span></div>
<div class="it dis" style="top:653px"><span class="tx">Преобразовать в профиль...</span></div>
<div class="sep" style="top:675px"></div>
<div class="it" style="top:681px"><span class="tx">Клавиатурные сокращения...</span><span class="sc">Alt+Shift+Ctrl+K</span></div>
<div class="it" style="top:700px"><span class="tx">Меню...</span><span class="sc">Alt+Shift+Ctrl+M</span></div>
<div class="it" style="top:719px"><span class="tx">Панель инструментов...</span></div>
<div class="it hi sm" style="top:738px"><span class="tx">Настройки</span><span class="ar"></span></div>
</div>
<div id="sub" class="menu">
<div class="it" style="top:2px"><span class="tx">Основные...</span><span class="sc">Ctrl+K</span></div>
<div class="sep" style="top:24px"></div>
<div class="it" style="top:30px"><span class="tx">Интерфейс...</span></div>
<div class="it" style="top:49px"><span class="tx">Рабочая среда...</span></div>
<div class="it" style="top:68px"><span class="tx">Инструменты...</span></div>
<div class="it" style="top:87px"><span class="tx">История изменений...</span></div>
<div class="it" style="top:106px"><span class="tx">Обработка файлов...</span></div>
<div class="it" style="top:125px"><span class="tx">Экспорт...</span></div>
<div class="it" style="top:144px"><span class="tx">Производительность...</span></div>
<div class="it" style="top:163px"><span class="tx">Рабочие диски...</span></div>
<div class="it" style="top:182px"><span class="tx">Курсоры...</span></div>
<div class="it" style="top:201px"><span class="tx">Прозрачность и цветовой охват...</span></div>
<div class="it" style="top:220px"><span class="tx">Единицы измерения и линейки...</span></div>
<div class="it" style="top:239px"><span class="tx">Направляющие, сетка и фрагменты...</span></div>
<div class="it" style="top:258px"><span class="tx">Внешние модули...</span></div>
<div class="it" style="top:277px"><span class="tx">Текст...</span></div>
<div class="it" style="top:296px"><span class="tx">3D...</span></div>
<div class="it" style="top:315px"><span class="tx">Просмотры технологии...</span></div>
<div class="sep" style="top:337px"></div>
<div class="it" style="top:343px"><span class="tx">Camera Raw...</span></div>
</div>
</body></html>
